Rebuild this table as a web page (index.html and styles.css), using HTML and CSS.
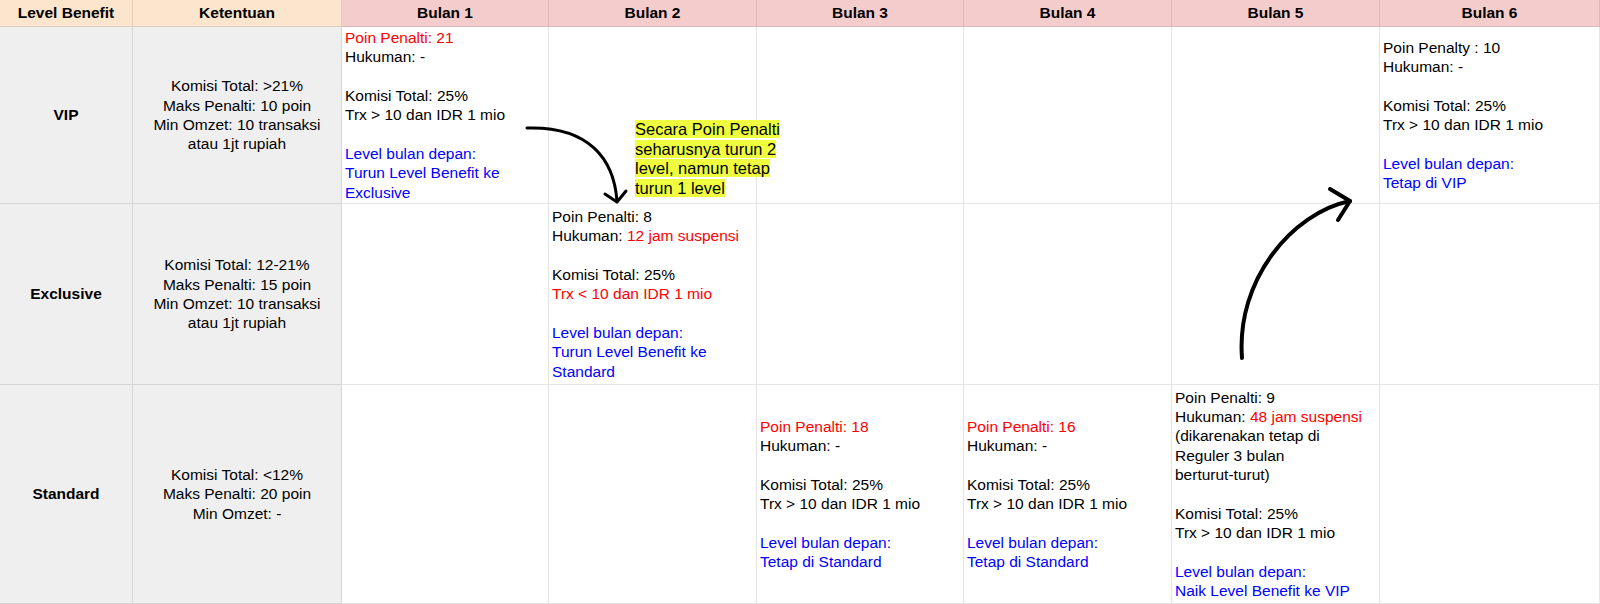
FILE: index.html
```html
<!DOCTYPE html>
<html lang="id">
<head>
    <meta charset="UTF-8">
    <title>Level Benefit</title>
    <link rel="stylesheet" href="styles.css">
</head>
<body>
    <div class="sheet">
        <!-- header -->
        <div class="cell head peach">Level Benefit</div>
        <div class="cell head peach">Ketentuan</div>
        <div class="cell head">Bulan 1</div>
        <div class="cell head">Bulan 2</div>
        <div class="cell head">Bulan 3</div>
        <div class="cell head">Bulan 4</div>
        <div class="cell head">Bulan 5</div>
        <div class="cell head">Bulan 6</div>

        <!-- VIP -->
        <div class="cell level">VIP</div>
        <div class="cell rule"><p>Komisi Total: &gt;21%<br>Maks Penalti: 10 poin<br>Min Omzet: 10 transaksi<br>atau 1jt rupiah</p></div>
        <div class="cell">
            <p><span class="red">Poin Penalti: 21</span><br>Hukuman: -</p>
            <p>Komisi Total: 25%<br>Trx &gt; 10 dan IDR 1 mio</p>
            <p class="blue">Level bulan depan:<br>Turun Level Benefit ke<br>Exclusive</p>
        </div>
        <div class="cell"></div>
        <div class="cell"></div>
        <div class="cell"></div>
        <div class="cell"></div>
        <div class="cell">
            <p>Poin Penalty : 10<br>Hukuman: -</p>
            <p>Komisi Total: 25%<br>Trx &gt; 10 dan IDR 1 mio</p>
            <p class="blue">Level bulan depan:<br>Tetap di VIP</p>
        </div>

        <!-- Exclusive -->
        <div class="cell level">Exclusive</div>
        <div class="cell rule"><p>Komisi Total: 12-21%<br>Maks Penalti: 15 poin<br>Min Omzet: 10 transaksi<br>atau 1jt rupiah</p></div>
        <div class="cell"></div>
        <div class="cell">
            <p>Poin Penalti: 8<br>Hukuman: <span class="red">12 jam suspensi</span></p>
            <p>Komisi Total: 25%<br><span class="red">Trx &lt; 10 dan IDR 1 mio</span></p>
            <p class="blue">Level bulan depan:<br>Turun Level Benefit ke<br>Standard</p>
        </div>
        <div class="cell"></div>
        <div class="cell"></div>
        <div class="cell"></div>
        <div class="cell"></div>

        <!-- Standard -->
        <div class="cell level">Standard</div>
        <div class="cell rule"><p>Komisi Total: &lt;12%<br>Maks Penalti: 20 poin<br>Min Omzet: -</p></div>
        <div class="cell"></div>
        <div class="cell"></div>
        <div class="cell">
            <p><span class="red">Poin Penalti: 18</span><br>Hukuman: -</p>
            <p>Komisi Total: 25%<br>Trx &gt; 10 dan IDR 1 mio</p>
            <p class="blue">Level bulan depan:<br>Tetap di Standard</p>
        </div>
        <div class="cell">
            <p><span class="red">Poin Penalti: 16</span><br>Hukuman: -</p>
            <p>Komisi Total: 25%<br>Trx &gt; 10 dan IDR 1 mio</p>
            <p class="blue">Level bulan depan:<br>Tetap di Standard</p>
        </div>
        <div class="cell">
            <p>Poin Penalti: 9<br>Hukuman: <span class="red">48 jam suspensi</span><br>(dikarenakan tetap di<br>Reguler 3 bulan<br>berturut-turut)</p>
            <p>Komisi Total: 25%<br>Trx &gt; 10 dan IDR 1 mio</p>
            <p class="blue">Level bulan depan:<br>Naik Level Benefit ke VIP</p>
        </div>
        <div class="cell"></div>

        <!-- annotations drawn over the sheet -->
        <div class="note">
            <span>Secara Poin Penalti</span><br>
            <span>seharusnya turun 2</span><br>
            <span>level, namun tetap</span><br>
            <span>turun 1 level</span>
        </div>
        <svg class="arrows" width="1600" height="604" viewBox="0 0 1600 604">
            <g fill="none" stroke="#000" stroke-linecap="round" stroke-linejoin="round">
                <path stroke-width="3" d="M527 128 C590 126 614 160 617 201"/>
                <path stroke-width="3" d="M605 194 L617 202 L626 191"/>
                <path stroke-width="4" d="M1242 358 C1236 280 1292 213 1350 201"/>
                <path stroke-width="4" d="M1330 189 L1350 201 L1338 220"/>
            </g>
        </svg>
    </div>
</body>
</html>
```

FILE: styles.css
```css
body {
    margin: 0;
    background-color: #fff;
    color: #000;
    font-family: "Liberation Sans", Arial, sans-serif;
    font-size: 15.5px;
    line-height: 19.3px;
}

.sheet {
    position: relative;
    width: 1600px;
    display: grid;
    grid-template-columns: 133px 209px 207px 208px 207px 208px 208px 220px;
    grid-template-rows: 27px 177px 181px 219px;
}

.cell {
    box-sizing: border-box;
    display: flex;
    flex-direction: column;
    justify-content: center;
    gap: 19.3px;
    padding: 0 3px;
    border-right: 1px solid rgba(0, 0, 0, 0.1);
    border-bottom: 1px solid rgba(0, 0, 0, 0.1);
    overflow: hidden;
    white-space: nowrap;
}

.cell p {
    margin: 0;
}

.head {
    background-color: #f4cccc;
    font-weight: bold;
    align-items: center;
}

.head.peach {
    background-color: #fce5cd;
}

.level {
    background-color: #efefef;
    font-weight: bold;
    align-items: center;
}

.rule {
    background-color: #efefef;
    align-items: center;
    text-align: center;
}

.red {
    color: #ff0000;
}

.blue {
    color: #0000ff;
}

/* floating text box from the drawing layer */
.note {
    position: absolute;
    left: 635px;
    top: 120px;
    font-size: 16.5px;
    line-height: 19.5px;
    white-space: nowrap;
}

.note span {
    background-color: #efff3f;
}

.arrows {
    position: absolute;
    top: 0;
    left: 0;
    pointer-events: none;
}
```
